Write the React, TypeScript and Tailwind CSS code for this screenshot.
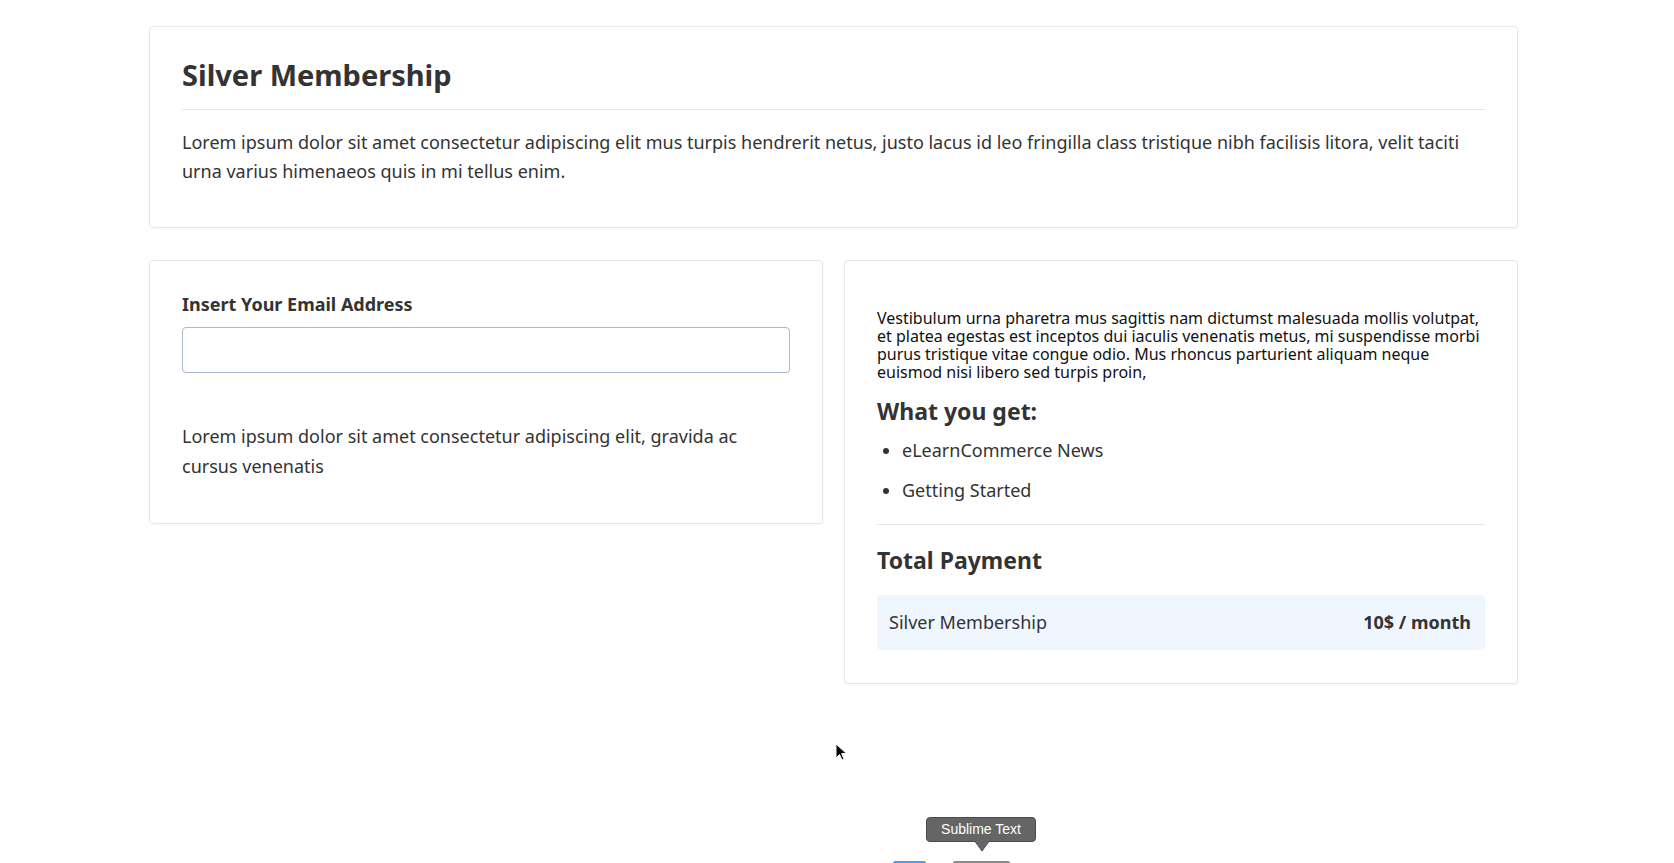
export default function App() {
  return (
    <div className="relative min-h-screen overflow-hidden bg-white font-['Noto_Sans',sans-serif] text-[#333]">
      <div className="ml-[149px] w-[1369px] pt-[26px]">
        {/* Header card */}
        <div className="rounded-[4px] border border-[#e2e8f0] px-8 pt-[31px] pb-[40px] shadow-[0_1px_3px_rgba(0,0,0,0.04)]">
          <h1 className="border-b border-[#e2e8f0] pb-[16px] text-[29px] font-bold leading-[1.2]">Silver Membership</h1>
          <p className="mt-[18px] text-[18px] leading-[29.5px]">
            Lorem ipsum dolor sit amet consectetur adipiscing elit mus turpis hendrerit netus, justo lacus id leo fringilla class tristique nibh facilisis litora, velit taciti urna varius himenaeos quis in mi tellus enim.
          </p>
        </div>

        <div className="mt-[32px] grid grid-cols-2 items-start gap-[21px]">
          {/* Email card */}
          <div className="rounded-[4px] border border-[#e2e8f0] px-8 pt-[30px] pb-[42px] shadow-[0_1px_3px_rgba(0,0,0,0.04)]">
            <label className="block text-[18px] font-bold leading-[27px]">Insert Your Email Address</label>
            <input
              type="email"
              className="mt-[9px] block h-[46px] w-full rounded-[4px] border border-[#a9b8cc] bg-white px-3 text-[18px] outline-none"
            />
            <p className="mt-[48px] text-[18px] leading-[30px]">
              Lorem ipsum dolor sit amet consectetur adipiscing elit, gravida ac cursus venenatis
            </p>
          </div>

          {/* Summary card */}
          <div className="rounded-[4px] border border-[#e2e8f0] px-8 pt-[48px] pb-[33px] shadow-[0_1px_3px_rgba(0,0,0,0.04)]">
            <p className="text-[16px] leading-[18.1px] text-[#111]">
              Vestibulum urna pharetra mus sagittis nam dictumst malesuada mollis volutpat, et platea egestas est inceptos dui iaculis venenatis metus, mi suspendisse morbi purus tristique vitae congue odio. Mus rhoncus parturient aliquam neque euismod nisi libero sed turpis proin,
            </p>
            <h2 className="mt-[17px] text-[23px] font-bold leading-[1.2]">What you get:</h2>
            <ul className="mt-[11px] list-disc space-y-[13.5px] pl-[25px] text-[18px] leading-[27px]">
              <li>eLearnCommerce News</li>
              <li>Getting Started</li>
            </ul>
            <div className="mt-[20px] h-px bg-[#e2e8f0]" />
            <h2 className="mt-[22px] text-[23px] font-bold leading-[1.2]">Total Payment</h2>
            <div className="mt-[20px] flex h-[55px] items-center justify-between rounded-[4px] bg-[#eff6fe] pl-[12px] pr-[14px] text-[18px]">
              <span>Silver Membership</span>
              <span className="font-bold">10$ / month</span>
            </div>
          </div>
        </div>
      </div>

      {/* mouse cursor */}
      <svg className="absolute left-[835px] top-[743px]" width="13" height="19" viewBox="0 0 13 19">
        <path d="M1 1 L1 15 L4.5 11.5 L7 17 L9 16 L6.6 10.6 L11.5 10.6 Z" fill="#000" stroke="#fff" strokeWidth="1" />
      </svg>

      {/* dock tooltip */}
      <div className="absolute left-[926px] top-[817px] flex h-[25px] w-[110px] items-center justify-center rounded-[4px] border border-[#4a4a4a] bg-[#656565] font-['Liberation_Sans',sans-serif] text-[14px] text-white">
        Sublime Text
      </div>
      <svg className="absolute left-[975px] top-[841px]" width="14" height="11" viewBox="0 0 14 11">
        <path d="M0 0 L7 10 L14 0 Z" fill="#656565" />
        <path d="M0 0.5 L7 10 L14 0.5" fill="none" stroke="#4a4a4a" strokeWidth="1" />
      </svg>

      {/* dock icons peeking */}
      <div className="absolute left-[893px] top-[861px] h-[2px] w-[33px] rounded-t-[2px] bg-[#4a9cf5]" />
      <div className="absolute left-[953px] top-[861px] h-[2px] w-[57px] rounded-t-[2px] bg-[#8a8a8a]" />
    </div>
  );
}
